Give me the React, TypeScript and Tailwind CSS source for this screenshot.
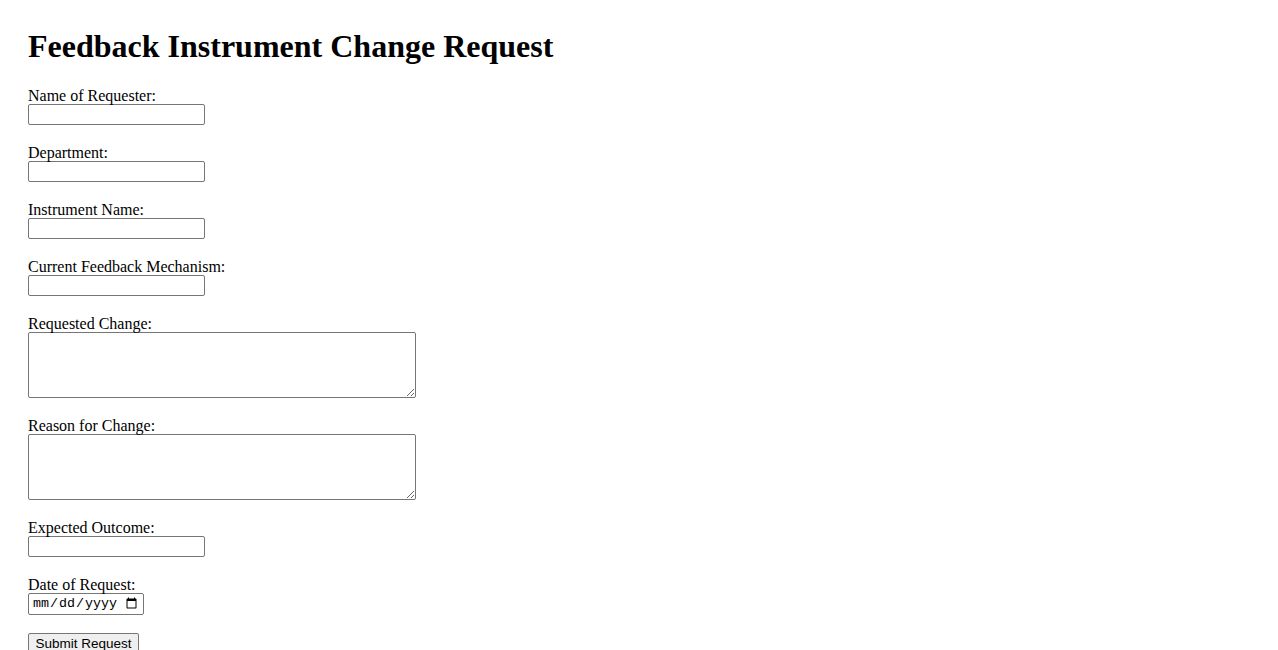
import React from "react";

const inputCls =
  "block w-[177px] h-[21px] border border-[#767676] rounded-[2px] bg-white px-[2px] py-[1px] text-[13.33px] font-['Liberation_Sans',Arial,sans-serif] text-black";
const areaCls =
  "block w-[388px] h-[66px] border border-[#767676] rounded-[2px] bg-white px-[2px] py-[2px] text-[13.33px] font-['Liberation_Mono',monospace] text-black resize";

function Field({ label, children }: { label: string; children: React.ReactNode }) {
  return (
    <div className="mb-[18px]">
      <label className="block h-[18px] leading-[19px]">{label}</label>
      {children}
    </div>
  );
}

export default function App() {
  return (
    <div className="min-h-[650px] bg-white pt-[28px] pl-[28px] text-black text-[16px] font-['Liberation_Serif','Times_New_Roman',serif]">
      <h1 className="m-0 mb-[21px] text-[32px] leading-[37px] font-bold">Feedback Instrument Change Request</h1>
      <form>
        <Field label="Name of Requester:">
          <input type="text" className={inputCls} />
        </Field>
        <Field label="Department:">
          <input type="text" className={inputCls} />
        </Field>
        <Field label="Instrument Name:">
          <input type="text" className={inputCls} />
        </Field>
        <Field label="Current Feedback Mechanism:">
          <input type="text" className={inputCls} />
        </Field>
        <Field label="Requested Change:">
          <textarea className={areaCls} />
        </Field>
        <Field label="Reason for Change:">
          <textarea className={areaCls} />
        </Field>
        <Field label="Expected Outcome:">
          <input type="text" className={inputCls} />
        </Field>
        <Field label="Date of Request:">
          <input
            type="date"
            className="block w-[116px] h-[22px] border border-[#767676] rounded-[2px] bg-white px-[3px] py-[1px] text-[13.33px] font-['Liberation_Mono',monospace] text-black"
          />
        </Field>
        <button
          type="button"
          className="block w-[111px] h-[21px] border border-[#767676] rounded-[2px] bg-[#efefef] px-[6px] py-[1px] text-center text-[13.5px] leading-[17px] font-['Liberation_Sans',Arial,sans-serif] text-black"
        >
          Submit Request
        </button>
      </form>
    </div>
  );
}
